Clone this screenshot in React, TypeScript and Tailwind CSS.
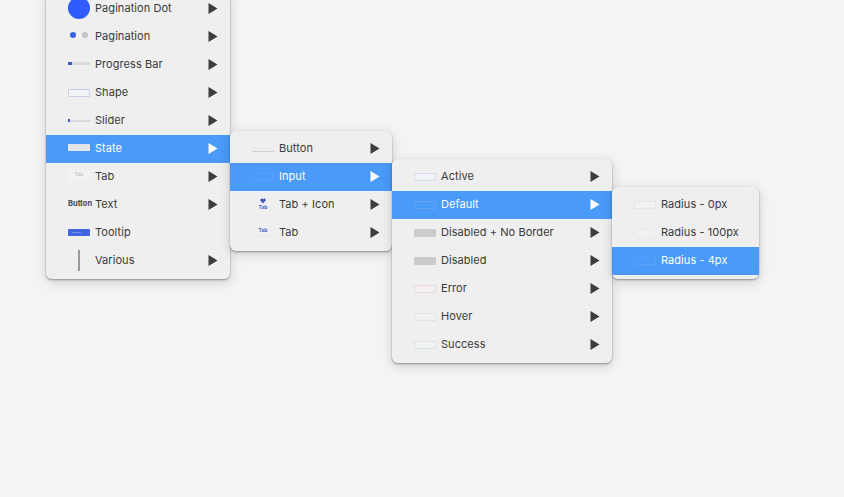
import type { ReactNode } from "react";

type Item = {
  label: string;
  thumb: ReactNode;
  active?: boolean;
  arrow?: boolean;
  submenu?: Item[];
};

const box = (cls: string) => <div className={`-mt-[1px] h-[8px] w-[22px] ${cls}`} />;

const radiusItems: Item[] = [
  { label: "Radius - 0px", arrow: false, thumb: box("border border-[#e6e6e6] bg-[#f2f2f2]") },
  { label: "Radius - 100px", arrow: false, thumb: box("rounded-full border border-[#ebebeb] bg-[#f2f2f2]") },
  { label: "Radius - 4px", arrow: false, active: true, thumb: box("rounded-[1px] border border-[#5a9ff2] bg-[#4a9af9]") },
];

const inputItems: Item[] = [
  { label: "Active", thumb: box("border border-[#d5dcec] bg-[#f2f3f6]") },
  { label: "Default", active: true, thumb: box("border border-[#62a3f0] bg-[#4a9af9]"), submenu: radiusItems },
  { label: "Disabled + No Border", thumb: box("rounded-[1px] bg-[#cbcbcd]") },
  { label: "Disabled", thumb: box("rounded-[1px] bg-[#cbcbcd]") },
  { label: "Error", thumb: box("border border-[#ecd9da] bg-[#f2f0f0]") },
  { label: "Hover", thumb: box("border border-[#e3e3e3] bg-[#f1f1f1]") },
  { label: "Success", thumb: box("border border-[#d9e5e2] bg-[#f0f2f1]") },
];

const TabMini = ({ light }: { light?: boolean }) => (
  <div
    className={`w-[22px] text-center text-[5px] leading-[6px] font-bold tracking-normal ${light ? "text-[#c9c9c9]" : "text-[#4a63c8]"}`}
  >
    Tab
  </div>
);

const stateItems: Item[] = [
  {
    label: "Button",
    thumb: <div className="mt-[1px] h-[5px] w-[22px] border-b border-[#cfcfcf] bg-[#ececec]" />,
  },
  { label: "Input", active: true, thumb: box("bg-[#4a9af9] border border-[#5a9ff2]"), submenu: inputItems },
  {
    label: "Tab + Icon",
    thumb: (
      <div className="-mt-[2px] flex w-[22px] flex-col items-center">
        <svg width="6" height="6" viewBox="0 0 6 6">
          <path d="M3 5.6 L0.5 2.8 A1.4 1.4 0 0 1 3 1.4 A1.4 1.4 0 0 1 5.5 2.8 Z" fill="#3f55b8" />
        </svg>
        <TabMini />
      </div>
    ),
  },
  {
    label: "Tab",
    thumb: (
      <div className="-mt-[2px] w-[22px] border-b border-[#e6e6e6] pb-[3px]">
        <TabMini />
      </div>
    ),
  },
];

const rootItems: Item[] = [
  {
    label: "Pagination Dot",
    thumb: (
      <div className="-mt-[2px] flex w-[22px] justify-center">
        <div className="h-[22px] w-[22px] rounded-full bg-[#2f5bff]" />
      </div>
    ),
  },
  {
    label: "Pagination",
    thumb: (
      <div className="-mt-[4px] flex w-[22px] items-center gap-[6px] pl-[2px]">
        <div className="h-[6px] w-[6px] rounded-full bg-[#3a62e6]" />
        <div className="h-[6px] w-[6px] rounded-full bg-[#c4c4c4]" />
      </div>
    ),
  },
  {
    label: "Progress Bar",
    thumb: (
      <div className="flex h-[3px] w-[22px] -translate-y-[2px] bg-[#d9d9de]">
        <div className="h-[3px] w-[4px] bg-[#3f5cc0]" />
      </div>
    ),
  },
  { label: "Shape", thumb: box("rounded-[1px] border border-[#c9cfe6] bg-[#f3f4f8]") },
  {
    label: "Slider",
    thumb: (
      <div className="relative -mt-[1px] h-[2px] w-[22px] bg-[#d9d9dc]">
        <div className="absolute -top-[1px] left-0 h-[3px] w-[2px] bg-[#3f5cc0]" />
      </div>
    ),
  },
  {
    label: "State",
    active: true,
    thumb: <div className="-mt-[3px] h-[7px] w-[22px] bg-[#e4e5e8]" />,
    submenu: stateItems,
  },
  {
    label: "Tab",
    thumb: (
      <div className="-mt-[3px] w-[22px] bg-[#f2f2f2] pb-[4px]">
        <TabMini light />
      </div>
    ),
  },
  {
    label: "Text",
    thumb: (
      <div className="-mt-[2px] w-[22px] text-center text-[7.5px] leading-[8px] font-bold tracking-normal whitespace-nowrap text-[#45484f]">
        Button
      </div>
    ),
  },
  {
    label: "Tooltip",
    arrow: false,
    thumb: (
      <div className="-mt-[2px] flex h-[7px] w-[22px] items-center rounded-[1px] bg-[#3f66e0] pl-[4px]">
        <div className="h-[1px] w-[9px] bg-[#6f8eea]" />
      </div>
    ),
  },
  {
    label: "Various",
    thumb: (
      <div className="-mt-[2px] flex w-[22px] justify-center">
        <div className="h-[21px] w-[2px] bg-[#9a9a9a]" />
      </div>
    ),
  },
];

const Arrow = ({ active }: { active?: boolean }) => (
  <svg width="10" height="11" viewBox="0 0 10 11" className="-mt-[1px] shrink-0">
    <path d="M0.5 0 L9.5 5.5 L0.5 11 Z" fill={active ? "#ffffff" : "#3d3d3d"} />
  </svg>
);

const Menu = ({ items, width, className = "" }: { items: Item[]; width: string; className?: string }) => (
  <div
    className={`rounded-[6px] bg-[#efefef] py-[4px] shadow-[0_1px_2px_rgba(0,0,0,0.35),0_3px_12px_rgba(0,0,0,0.16)] ${width} ${className}`}
  >
    {items.map((item) => (
      <div
        key={item.label}
        className={`relative flex h-[28px] items-center pr-[12px] pl-[22px] ${
          item.active ? "bg-[#4a9af9] text-white" : "text-[#3a3a3a]"
        }`}
      >
        <div className="flex w-[22px] shrink-0 justify-center">{item.thumb}</div>
        <span className="ml-[5px] flex-1 pb-[2px] whitespace-nowrap">{item.label}</span>
        {item.arrow !== false && <Arrow active={item.active} />}
        {item.submenu && (
          <Menu
            items={item.submenu}
            width={item.submenu === stateItems ? "w-[162px]" : item.submenu === inputItems ? "w-[220px]" : "w-[147px]"}
            className="absolute top-[-4px] left-full z-10"
          />
        )}
      </div>
    ))}
  </div>
);

export default function App() {
  return (
    <div className="relative h-[497px] w-[844px] overflow-hidden bg-[#f4f4f4] font-['Inter',sans-serif] text-[11px] tracking-[0.06px]">
      <Menu items={rootItems} width="w-[184px]" className="absolute top-[-9px] left-[46px]" />
    </div>
  );
}
